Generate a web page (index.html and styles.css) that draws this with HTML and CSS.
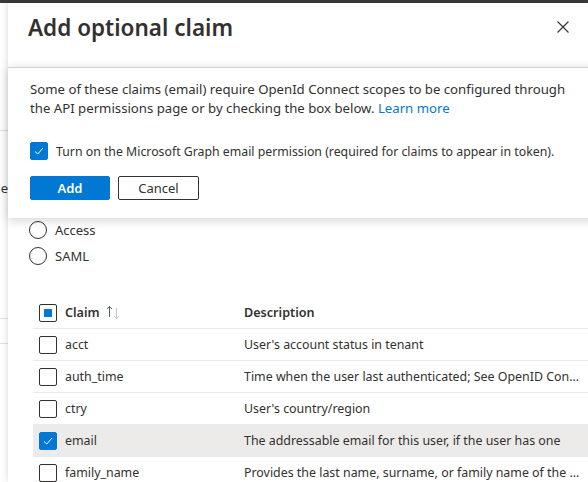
FILE: index.html
```html
<!DOCTYPE html>
<html lang="en">
<head>
<meta charset="utf-8">
<title>Add optional claim</title>
<link rel="stylesheet" href="styles.css">
</head>
<body>
<div class="topbar"></div>
<div class="stage">
  <div class="backdrop">
    <div class="bd-rule bd-r1"></div>
    <div class="bd-text"><span>Name</span></div>
    <div class="bd-rule bd-r2"></div>
    <div class="bd-rule bd-r3"></div>
  </div>
  <section class="panel">
    <header class="panel-header">
      <h1 class="panel-title">Add optional claim</h1>
      <button class="close-btn" aria-label="Close">
        <svg width="12" height="12" viewBox="0 0 12 12"><path d="M0.5 0.5 L11.5 11.5 M11.5 0.5 L0.5 11.5" stroke="#323130" stroke-width="1.1" fill="none"/></svg>
      </button>
    </header>
    <div class="panel-body">
      <div class="field-label">Token type</div>
      <div class="radios">
        <label class="radio"><span class="radio-circle"></span>ID</label>
        <label class="radio"><span class="radio-circle"></span>Access</label>
        <label class="radio"><span class="radio-circle"></span>SAML</label>
      </div>
      <div class="claims">
        <div class="row head">
          <div class="cell c-claim"><span class="box partial"></span><span class="head-text">Claim</span><svg class="sort" width="15" height="15" viewBox="0 0 15 15"><path d="M3.5 1.5 V12 M1 4 L3.5 1.5 L6 4" stroke="#605e5c" stroke-width="1" fill="none"/><path d="M10.5 3 V13.5 M8 11 L10.5 13.5 L13 11" stroke="#c8c6c4" stroke-width="1" fill="none"/></svg></div>
          <div class="cell c-desc head-text">Description</div>
        </div>
        <div class="row">
          <div class="cell c-claim"><span class="box"></span>acct</div>
          <div class="cell c-desc">User's account status in tenant</div>
        </div>
        <div class="row">
          <div class="cell c-claim"><span class="box"></span>auth_time</div>
          <div class="cell c-desc">Time when the user last authenticated; See OpenID Connect spec</div>
        </div>
        <div class="row">
          <div class="cell c-claim"><span class="box"></span>ctry</div>
          <div class="cell c-desc">User's country/region</div>
        </div>
        <div class="row selected">
          <div class="cell c-claim"><span class="box checked"><svg width="12" height="12" viewBox="0 0 12 12"><path d="M2 6.5 L4.8 9 L10 3" stroke="#fff" stroke-width="1" fill="none"/></svg></span>email</div>
          <div class="cell c-desc">The addressable email for this user, if the user has one</div>
        </div>
        <div class="row">
          <div class="cell c-claim"><span class="box"></span>family_name</div>
          <div class="cell c-desc">Provides the last name, surname, or family name of the user</div>
        </div>
      </div>
    </div>
    <div class="callout">
      <p class="callout-text">Some of these claims (email) require OpenId Connect scopes to be configured through<br>the API permissions page or by checking the box below. <a href="#" class="link">Learn more</a></p>
      <label class="check-line"><span class="box checked"><svg width="12" height="12" viewBox="0 0 12 12"><path d="M2 6.5 L4.8 9 L10 3" stroke="#fff" stroke-width="1" fill="none"/></svg></span>Turn on the Microsoft Graph email permission (required for claims to appear in token).</label>
      <div class="actions">
        <button class="btn primary">Add</button>
        <button class="btn secondary">Cancel</button>
      </div>
    </div>
  </section>
</div>
</body>
</html>
```
FILE: styles.css
```css
* { box-sizing: border-box; }
html, body { margin: 0; padding: 0; background: #fff; }
body {
  font-family: "Noto Sans", "Open Sans", sans-serif;
  font-size: 13px;
  color: #323130;
  width: 588px;
  height: 482px;
  overflow: hidden;
}
.topbar { height: 3px; background: #3b3a39; }
.stage { display: flex; height: 479px; }
.backdrop { width: 8px; flex: none; overflow: hidden; display: flex; flex-direction: column; }
.bd-rule { height: 1px; background: #e1dfdd; width: 8px; flex: none; }
.bd-r1 { margin-top: 127px; }
.bd-text { display: flex; justify-content: flex-end; white-space: nowrap; margin-top: 47px; height: 20px; line-height: 20px; }
.bd-r2 { margin-top: 120px; }
.bd-r3 { margin-top: 24px; }

.panel {
  flex: 1;
  position: relative;
  background: #fff;
  box-shadow: 0 0 7px rgba(0,0,0,0.16);
  min-width: 0;
}
.panel-header {
  height: 64px;
  display: flex;
  align-items: center;
  justify-content: space-between;
  padding: 0 19px 16px 20px;
}
.panel-title {
  margin: 0;
  font-size: 22.5px;
  font-weight: 600;
  color: #323130;
}
.close-btn {
  border: 0; background: none; padding: 0; width: 12px; height: 12px; display: flex;
}
.panel-body { padding: 0 0 0 21px; }
.field-label { height: 22px; margin-top: 92px; font-weight: 600; }
.radios { display: flex; flex-direction: column; gap: 8px; margin-top: 14px; }
.radio { display: flex; align-items: center; gap: 8px; height: 18px; font-size: 13px; }
.radio-circle { width: 18px; height: 18px; border: 1px solid #323130; border-radius: 50%; flex: none; }

.claims { margin-top: 32px; margin-left: 4px; font-size: 12.4px; }
.row { display: flex; height: 32px; border-bottom: 1px solid #edebe9; align-items: center; white-space: nowrap; }
.row.selected { background: #edebe9; }
.cell { overflow: hidden; text-overflow: ellipsis; }
.c-claim { width: 211px; flex: none; padding-left: 6px; display: flex; align-items: center; gap: 8px; }
.c-desc { width: 336px; flex: none; }
.head-text { font-weight: 600; font-size: 12.6px; }
.sort { flex: none; margin-left: -2px; }

.box {
  width: 18px; height: 18px; flex: none;
  border: 1px solid #323130; border-radius: 2px;
  display: inline-flex; align-items: center; justify-content: center;
}
.box.checked { background: #0078d4; border-color: #0078d4; }
.box.partial::after { content: ""; width: 8px; height: 8px; background: #0078d4; }

.callout {
  position: absolute;
  top: 64px; left: 0; right: -20px;
  height: 151px;
  background: #fff;
  border-top: 1px solid #d2d0ce;
  box-shadow: 0 2px 10px rgba(0,0,0,0.18);
  padding: 12px 22px 0 22px;
}
.callout-text { margin: 0; line-height: 19px; white-space: nowrap; font-size: 13.2px; }
.link { color: #0078d4; text-decoration: none; }
.check-line { display: flex; align-items: center; gap: 8px; margin-top: 24px; height: 18px; white-space: nowrap; font-size: 12.3px; }
.actions { display: flex; gap: 8px; margin-top: 16px; }
.btn {
  height: 24px; font-family: inherit; font-size: 13px; border-radius: 2px; padding: 0; color: #323130;
}
.btn.primary { width: 80px; background: #0078d4; color: #fff; border: 1px solid #0078d4; font-weight: 600; }
.btn.secondary { width: 81px; background: #fff; color: #323130; border: 1px solid #323130; }
```
